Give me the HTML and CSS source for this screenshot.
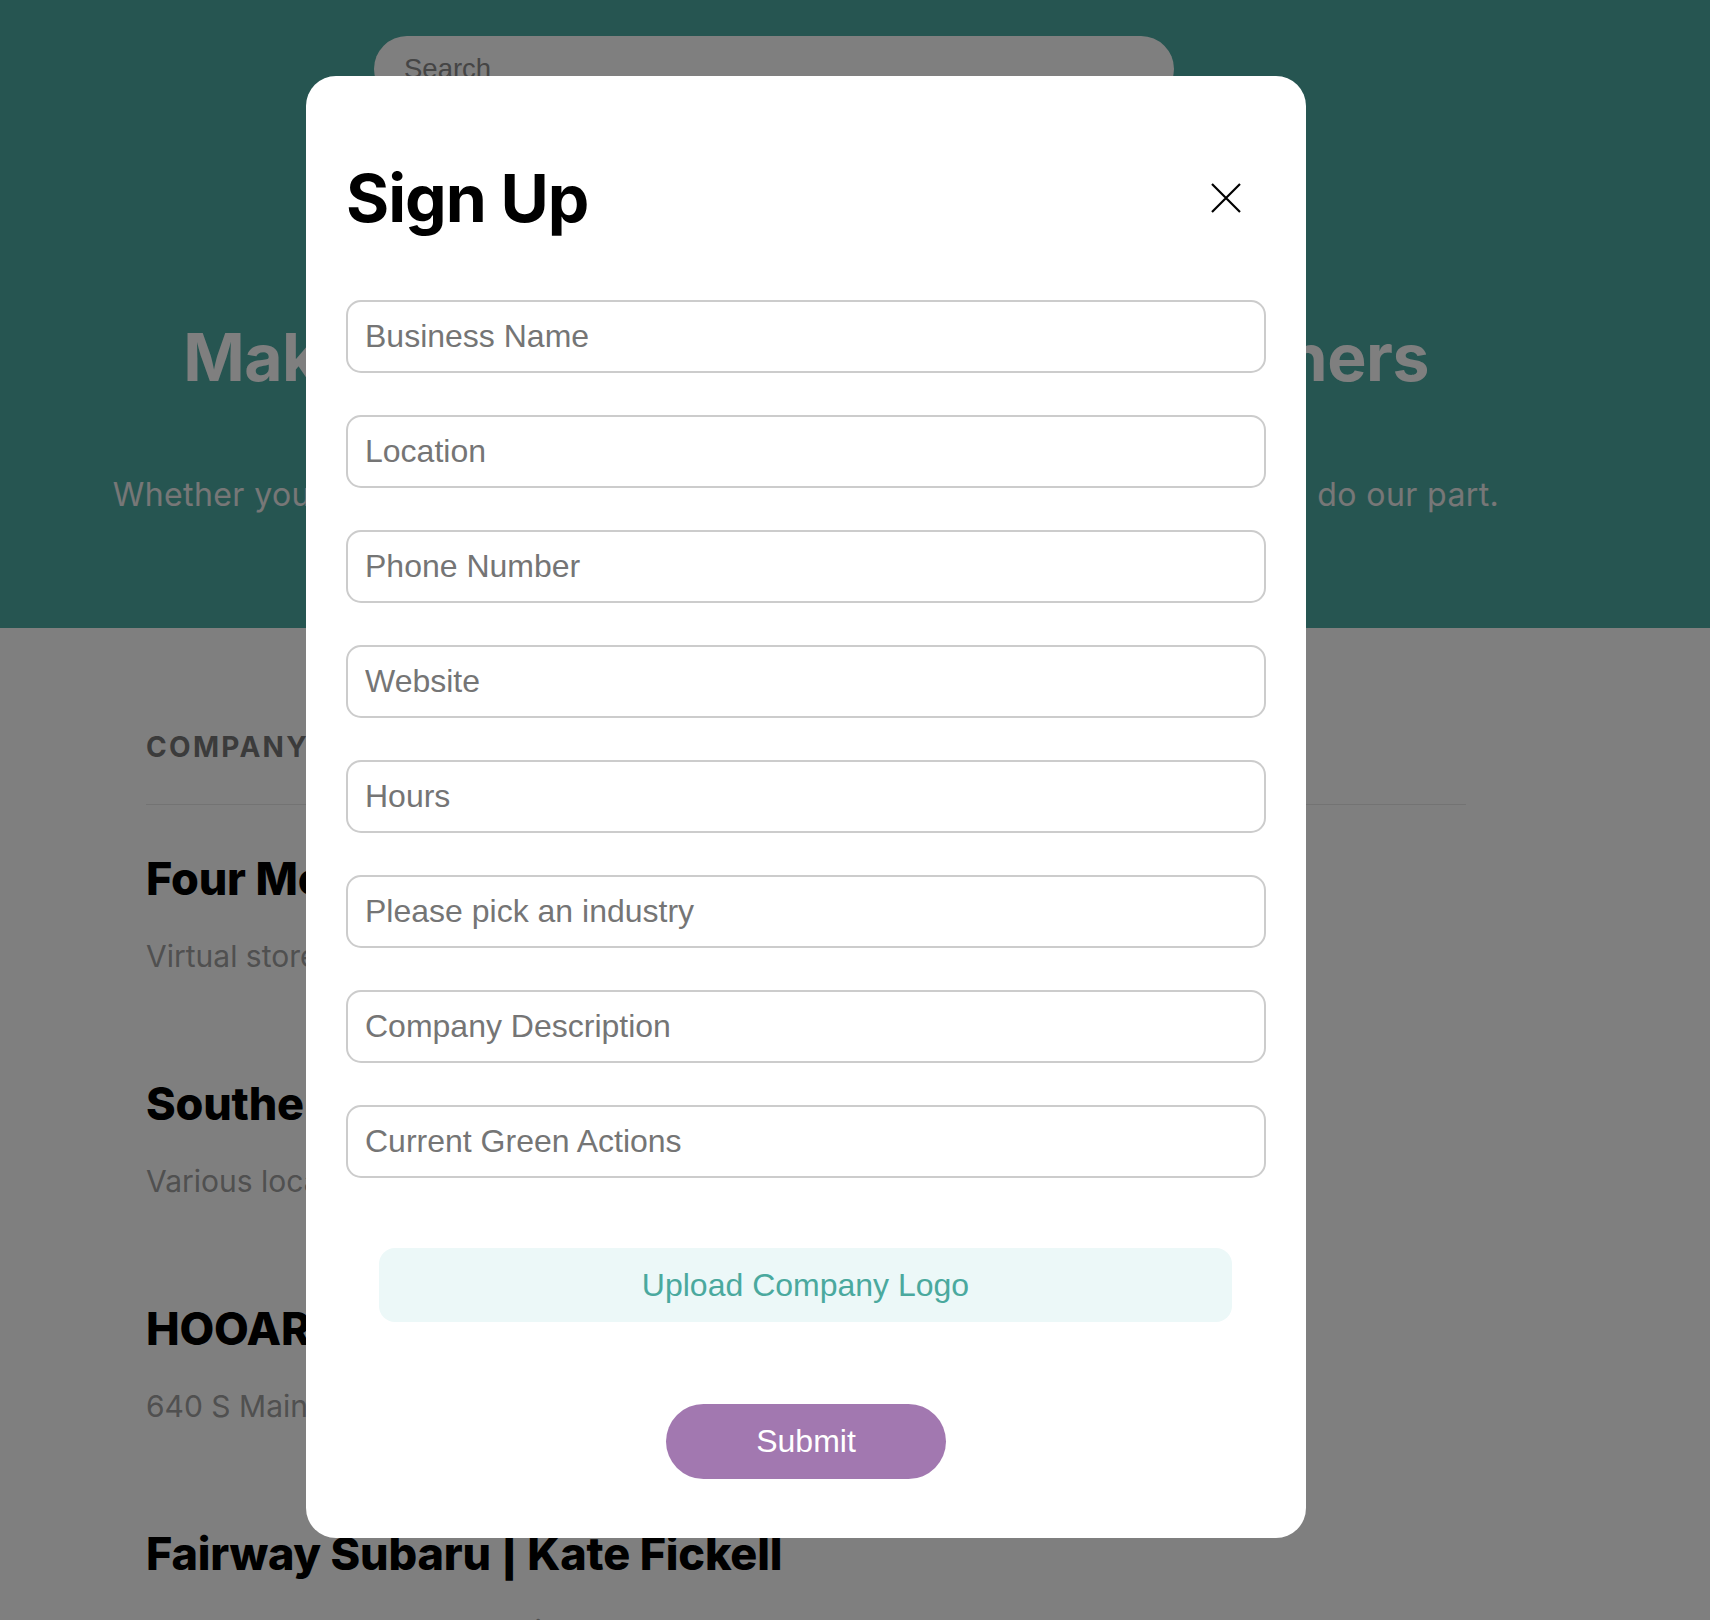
FILE: index.html
```html
<!DOCTYPE html>
<html lang="en">
<head>
<meta charset="utf-8">
<title>Sign Up</title>
<link rel="stylesheet" href="styles.css">
</head>
<body>
  <header class="hero">
    <div class="hero-inner">
      <div class="nav">
        <div class="search"><input class="search-input" type="text" placeholder="Search"></div>
      </div>
      <h1 class="hero-title">Make a Difference with All Our Partners</h1>
      <p class="hero-sub">Whether you run a small local shop or a large national corporation, we can all do our part.</p>
    </div>
  </header>

  <main class="content">
    <div class="content-inner">
      <div class="list-head">COMPANY</div>
      <div class="list">
        <div class="item">
          <h3 class="item-name">Four Moons Farm</h3>
          <p class="item-loc">Virtual store</p>
        </div>
        <div class="item">
          <h3 class="item-name">Southern Eats</h3>
          <p class="item-loc">Various locations</p>
        </div>
        <div class="item">
          <h3 class="item-name">HOOAR Coffee</h3>
          <p class="item-loc">640 S Main St, Greenville</p>
        </div>
        <div class="item">
          <h3 class="item-name">Fairway Subaru | Kate Fickell</h3>
          <p class="item-loc">2000 Laurens Road Greenville SC</p>
        </div>
      </div>
    </div>
  </main>

  <div class="overlay">
    <div class="overlay-inner">
      <div class="modal">
        <div class="modal-head">
          <h2 class="modal-title">Sign Up</h2>
          <button class="close" type="button" aria-label="Close">
            <svg width="30" height="30" viewBox="0 0 30 30"><path d="M1 1 L29 29 M29 1 L1 29" stroke="#000" stroke-width="2.2" fill="none"/></svg>
          </button>
        </div>
        <form class="form">
          <input class="field" type="text" placeholder="Business Name">
          <input class="field" type="text" placeholder="Location">
          <input class="field" type="text" placeholder="Phone Number">
          <input class="field" type="text" placeholder="Website">
          <input class="field" type="text" placeholder="Hours">
          <input class="field" type="text" placeholder="Please pick an industry">
          <input class="field" type="text" placeholder="Company Description">
          <input class="field" type="text" placeholder="Current Green Actions">
          <button class="upload" type="button">Upload Company Logo</button>
          <button class="submit" type="button">Submit</button>
        </form>
      </div>
    </div>
  </div>
</body>
</html>
```

FILE: styles.css
```css
* { box-sizing: border-box; }

body {
  margin: 0;
  background: #ffffff;
  font-family: Inter, "Noto Sans", sans-serif;
}

.hero {
  background: #4caaa2;
  height: 628px;
}

.hero-inner {
  width: 1612px;
  display: flex;
  flex-direction: column;
  align-items: center;
  padding-top: 36px;
}

.nav {
  display: flex;
  justify-content: center;
  width: 100%;
  padding-right: 64px;
}

.search {
  width: 800px;
  height: 66px;
  background: #ffffff;
  border-radius: 33px;
  display: flex;
  align-items: center;
  padding: 0 30px;
}

.search-input {
  border: none;
  outline: none;
  background: transparent;
  font-family: "Liberation Sans", Arial, sans-serif;
  font-size: 27.5px;
  width: 100%;
  padding: 0;
}

.search-input::placeholder { color: #8a8a8a; }

.hero-title {
  margin: 216px 0 0;
  font-size: 66px;
  line-height: 79px;
  font-weight: 700;
  letter-spacing: -0.5px;
  color: #ffffff;
  white-space: nowrap;
}

.hero-sub {
  margin: 75px 0 0;
  font-size: 32px;
  line-height: 45px;
  letter-spacing: 0.4px;
  color: #eeeeee;
  white-space: nowrap;
}

.content-inner {
  width: 1612px;
  padding: 102px 146px 0;
}

.list-head {
  font-size: 28px;
  line-height: 34px;
  font-weight: 700;
  letter-spacing: 2.3px;
  color: #777777;
  padding-bottom: 40px;
  border-bottom: 1px solid #e6e6e6;
}

.list {
  display: flex;
  flex-direction: column;
  gap: 98px;
  padding-top: 47px;
}

.item-name {
  margin: 0;
  font-size: 45px;
  line-height: 53px;
  font-weight: 800;
  letter-spacing: -0.2px;
  color: #000000;
}

.item-loc {
  margin: 29px 0 0;
  font-size: 30px;
  line-height: 45px;
  color: #a0a0a0;
}

/* Modal */
.overlay {
  position: fixed;
  inset: 0;
  background: rgba(0, 0, 0, 0.5);
}

.overlay-inner {
  width: 1612px;
  display: flex;
  justify-content: center;
  padding-top: 76px;
}

.modal {
  width: 1000px;
  background: #ffffff;
  border-radius: 30px;
  padding: 82px 40px 59px;
}

.modal-head {
  height: 80px;
  display: flex;
  align-items: center;
  justify-content: space-between;
}

.modal-title {
  margin: 0;
  font-size: 66px;
  line-height: 80px;
  font-weight: 700;
  letter-spacing: -1px;
  color: #000000;
}

.close {
  border: none;
  background: transparent;
  padding: 0;
  margin-right: 25px;
  width: 30px;
  height: 30px;
  display: flex;
}

.form {
  margin-top: 62px;
  display: flex;
  flex-direction: column;
  gap: 42px;
}

.field {
  height: 73px;
  border: 2px solid #cccccc;
  border-radius: 15px;
  padding: 0 17px;
  font-family: "Liberation Sans", Arial, sans-serif;
  font-size: 32px;
  color: #333;
  outline: none;
  background: #ffffff;
}

.field::placeholder { color: #757575; }

.upload {
  margin: 28px 34px 0 33px;
  height: 74px;
  border: none;
  border-radius: 16px;
  background: #ecf8f8;
  color: #4aa99e;
  font-family: "Liberation Sans", Arial, sans-serif;
  font-size: 32px;
}

.submit {
  align-self: center;
  margin-top: 40px;
  width: 280px;
  height: 75px;
  border: none;
  border-radius: 38px;
  background: #a278b0;
  color: #ffffff;
  font-family: "Liberation Sans", Arial, sans-serif;
  font-size: 32px;
}
```
